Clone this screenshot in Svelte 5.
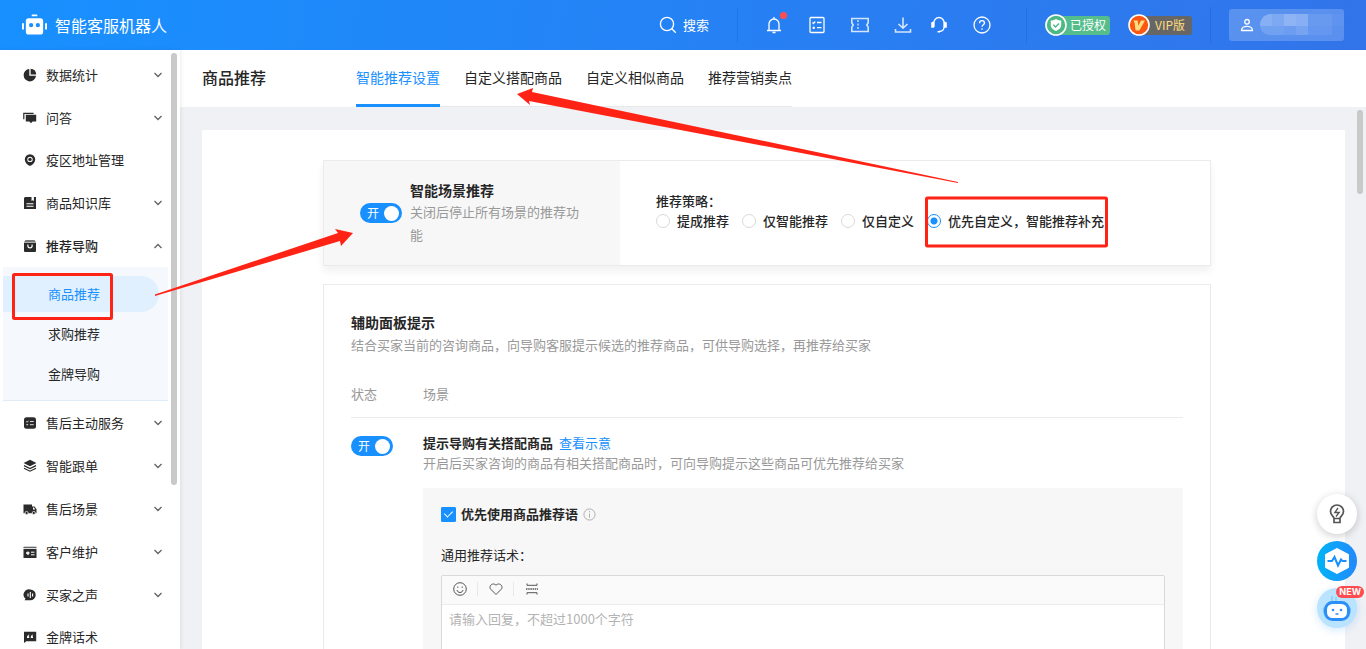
<script lang="ts">
  type MenuItem = { label: string; icon: string; leaf?: boolean; children?: string[] };

  const menu: MenuItem[] = [
    { label: '数据统计', icon: 'pie' },
    { label: '问答', icon: 'chat' },
    { label: '疫区地址管理', icon: 'pin', leaf: true },
    { label: '商品知识库', icon: 'book' },
    { label: '推荐导购', icon: 'bag', children: ['商品推荐', '求购推荐', '金牌导购'] },
    { label: '售后主动服务', icon: 'list' },
    { label: '智能跟单', icon: 'layers' },
    { label: '售后场景', icon: 'truck' },
    { label: '客户维护', icon: 'card' },
    { label: '买家之声', icon: 'voice' },
    { label: '金牌话术', icon: 'quote', leaf: true }
  ];

  const tabs = ['智能推荐设置', '自定义搭配商品', '自定义相似商品', '推荐营销卖点'];
  const strategies = ['提成推荐', '仅智能推荐', '仅自定义', '优先自定义，智能推荐补充'];

  let activeChild = $state('商品推荐');
  let activeTab = $state(tabs[0]);
  let strategy = $state(strategies[3]);
  let sceneOn = $state(true);
  let hintOn = $state(true);
  let preferWords = $state(true);
  let reply = $state('');
</script>

{#snippet menuIcon(name: string)}
  <svg class="menu-icon" viewBox="0 0 14 14" width="14" height="14" aria-hidden="true">
    {#if name === 'pie'}
      <path d="M6.3 1v6.7H13A6.2 6.2 0 1 1 6.3 1Z" />
      <path d="M7.6.8A6 6 0 0 1 13.2 6.4H7.6Z" />
    {:else if name === 'chat'}
      <path d="M.8 8.2V2.3h9.8" fill="none" stroke="#2b2b2b" stroke-width="1.2" />
      <path d="M2.8 3.8h10.4v6.8H9.6L8 12.3l-1.6-1.7H2.8Z" />
    {:else if name === 'pin'}
      <path
        fill-rule="evenodd"
        d="M7 1.2a5.2 5.2 0 0 1 5.2 5.2c0 3-2.5 5.2-5.2 6.6-2.7-1.4-5.2-3.6-5.2-6.6A5.2 5.2 0 0 1 7 1.2Zm0 2.5a2.7 2.7 0 1 0 0 5.4 2.7 2.7 0 0 0 0-5.4Z"
      />
      <circle cx="7" cy="6.4" r="1.7" />
    {:else if name === 'book'}
      <path fill-rule="evenodd" d="M2 1h6.5v4l1.2-.8 1.2.8V1H13v12H1V2ZM3.5 7.2v1h7v-1Zm0 2.600v1h7v-1Z" />
    {:else if name === 'bag'}
      <path d="M2.5 1h9L13 3.2H1Z" fill="#777" />
      <path
        fill-rule="evenodd"
        d="M1 3.7h12V12a1 1 0 0 1-1 1H2a1 1 0 0 1-1-1ZM4.3 5.6v1.2a2.7 2.7 0 0 0 5.4 0V5.6H8.5v1.2a1.5 1.5 0 0 1-3 0V5.600Z"
      />
    {:else if name === 'list'}
      <rect x="1" y="1.3" width="12" height="11.4" rx="2.5" />
      <path d="M3.3 5.5l.9.8 1.2-1.5M3.3 8.7h1.900M7 5.500h3.700M7 8.700h3.700" fill="none" stroke="#ddd" />
    {:else if name === 'layers'}
      <path d="M7 .8 13.4 4 7 7.3.6 4Z" />
      <path d="m1 6.6 6 3 6-3M1 9.2l6 3 6-3" fill="none" stroke="#2b2b2b" stroke-width="1.2" />
    {:else if name === 'truck'}
      <path fill-rule="evenodd" d="M.5 2.5H9v2h2.500l2 2.800v3.900H.5Zm9.500 3v2h2.300l-1.300-2Z" />
      <circle cx="3.6" cy="11" r="1.6" stroke="#fff" stroke-width=".7" />
      <circle cx="10.8" cy="11" r="1.6" stroke="#fff" stroke-width=".7" />
    {:else if name === 'card'}
      <path d="M.5 1.700h13v1.500H.5Z" fill="#666" />
      <path d="M.5 4h13v9H.5Z" />
      <path d="M5 6.500v3.500M3 8h3.500" stroke="#fff" stroke-width="1.300" />
      <path d="M8 7.200h3.500M8 9.800h3.500" stroke="#fff" />
    {:else if name === 'voice'}
      <path d="M7.3 1.500a5.300 5.300 0 1 1 0 10.800H1.500l1-1.600A5.300 5.300 0 0 1 7.300 1.500Z" />
      <path d="M5 5.500v3M7.300 4v6M9.600 5.500v3" stroke="#fff" stroke-width="1.100" />
    {:else}
      <path d="M1 1.800h12.200v9.400H3.300L1 13Z" />
      <path
        d="M6.200 4.600c-1.700.5-2.300 1.500-2.200 3.500h2.200V6.300h-1c0-.6.300-.9 1-1.100Zm3.800 0c-1.700.5-2.300 1.500-2.200 3.500H10V6.300H9c0-.6.300-.9 1-1.100Z"
        fill="#fff"
      />
    {/if}
  </svg>
{/snippet}

<div class="app">
  <header class="topbar">
    <a class="brand" href="#home">
      <svg viewBox="0 0 26 22" width="25" height="22" aria-hidden="true" fill="#fff">
        <rect x="10" y="0" width="6" height="2" rx="1" />
        <rect x="0" y="9" width="2" height="7" rx="1" />
        <rect x="24" y="9" width="2" height="7" rx="1" />
        <path
          fill-rule="evenodd"
          d="M7 4h12a3 3 0 0 1 3 3v11a3 3 0 0 1-3 3H7a3 3 0 0 1-3-3V7a3 3 0 0 1 3-3Zm2.500 5a2.200 2.200 0 1 0 0 4.400 2.200 2.200 0 0 0 0-4.400Zm7 0a2.200 2.200 0 1 0 0 4.400 2.200 2.200 0 0 0 0-4.400Z"
        />
      </svg>
      <span>智能客服机器人</span>
    </a>

    <button class="search" type="button">
      <svg viewBox="0 0 18 18" width="18" height="18" class="line" aria-hidden="true">
        <circle cx="8" cy="8" r="6.600" />
        <path d="m12.800 12.800 4 4" />
      </svg>
      <span>搜索</span>
    </button>
    <i class="divider"></i>

    <nav class="tools" aria-label="工具">
      <button type="button" class="bell" aria-label="通知">
        <svg viewBox="0 0 18 18" width="18" height="18" class="line">
          <path d="M2 14.500h14M4 14.500V8a5 5 0 0 1 10 0v6.500M9 1v2M7.500 16.500h3" />
        </svg>
      </button>
      <button type="button" aria-label="任务">
        <svg viewBox="0 0 18 18" width="18" height="18" class="line">
          <rect x="2" y="1.500" width="14" height="15" rx="1" />
          <path d="m4.500 6.500 1 1 1.700-2M4.700 11l2 1.500M6.700 11l-2 1.500M9 6.500h4.500M9 11.700h4.500" />
        </svg>
      </button>
      <button type="button" aria-label="卡券" class="soft">
        <svg viewBox="0 0 18 18" width="18" height="18" class="line">
          <path d="M.8 2.500h16.400v4.300L15.800 9l1.400 2.200v4.300H.8v-4.300L2.200 9 .8 6.800Z" stroke-width="1.600" />
          <path d="M7 4v10" stroke-dasharray="2 1.500" />
        </svg>
      </button>
      <span class="pair">
        <button type="button" aria-label="下载" class="soft">
          <svg viewBox="0 0 18 18" width="18" height="18" class="line">
            <path d="M9 1.500V12M4.500 8 9 12.200 13.500 8M1.500 13v3h15v-3" stroke-width="1.600" />
          </svg>
        </button>
        <button type="button" aria-label="客服">
          <svg viewBox="0 0 18 18" width="18" height="18" class="line">
            <path d="M4 11V6.500a5 5 0 0 1 10 0V11c0 3-2 4.500-5 4.500" />
            <path d="M3.200 6.500v4.500H2V7ZM14.800 6.500v4.500H16V7ZM7.500 15.700h2.500" stroke-width="1.600" />
          </svg>
        </button>
      </span>
      <button type="button" aria-label="帮助">
        <svg viewBox="0 0 18 18" width="18" height="18" class="line">
          <circle cx="9" cy="9" r="8" />
          <path d="M6.500 7.200c0-3.400 5-3.200 5-.2 0 1.800-2.500 1.800-2.500 3.800M9 12.300v1.400" />
        </svg>
      </button>
    </nav>
    <i class="divider"></i>

    <div class="badges">
      <span class="badge auth">
        <svg viewBox="0 0 22 22" width="22" height="22" aria-hidden="true">
          <circle cx="11" cy="11" r="10" fill="#4cb985" stroke="#fff" stroke-width="1.600" />
          <path d="M11 5c2 1.300 3.500 1.500 5.200 1.500V11c0 3-2.500 4.800-5.200 6-2.700-1.200-5.200-3-5.200-6V6.500C7.500 6.500 9 6.300 11 5Z" fill="#fff" />
          <path d="m8.300 10.700 2.200 2.200 3.500-3.500" fill="none" stroke="#4cb985" stroke-width="1.400" />
        </svg>
        <span>已授权</span>
      </span>
      <span class="badge vip">
        <svg viewBox="0 0 22 22" width="22" height="22" aria-hidden="true">
          <circle cx="11" cy="11" r="10" fill="#fb5713" stroke="#fff" stroke-width="1.600" />
          <path d="M5.300 6.500h4.300l.8 5.200 2.600-5.200h4l-5.600 10H7.600L6.500 8.500Z" fill="#ffdc7c" />
        </svg>
        <span>VIP版</span>
      </span>
    </div>
    <i class="divider"></i>

    <button class="user" type="button" aria-label="账号">
      <svg viewBox="0 0 14 14" width="14" height="14" class="line" aria-hidden="true">
        <circle cx="7" cy="3.800" r="2.300" />
        <path d="M1.500 12.500c0-5.500 11-5.500 11 0Z" />
      </svg>
      <svg class="mask" viewBox="0 0 84 22" width="84" height="22" aria-hidden="true" fill="#fff">
        <path d="M10 0h2v12H0A11 11 0 0 1 10 0Z" fill-opacity=".28" />
        <path d="M12 0h12v12H12Z" fill-opacity=".22" />
        <path d="M24 0h12v12H24Z" fill-opacity=".32" />
        <path d="M36 0h12v12H36Z" fill-opacity=".28" />
        <path d="M48 0h24v12H48Z" fill-opacity=".09" />
        <path d="M72 0h12v12H72Z" fill-opacity=".03" />
        <path d="M0 12h24v9H10A10 10 0 0 1 0 12Z" fill-opacity=".15" />
        <path d="M24 12h12v9H24Z" fill-opacity=".11" />
        <path d="M36 12h12v9H36Z" fill-opacity=".18" />
        <path d="M48 12h24v9H48Z" fill-opacity=".07" />
      </svg>
    </button>
  </header>

  <div class="body">
    <aside class="sidebar">
      <ul class="menu">
        {#each menu as item}
          <li>
            <a class="menu-row" class:leaf={item.leaf} class:open={item.children} href="#menu">
              {@render menuIcon(item.icon)}
              <span>{item.label}</span>
              {#if !item.leaf}
                <svg class="caret" viewBox="0 0 10 10" width="10" height="10" aria-hidden="true">
                  <path d={item.children ? 'm1.500 7 3.500-3.500L8.500 7' : 'm1.500 3 3.500 3.500L8.500 3'} />
                </svg>
              {/if}
            </a>
            {#if item.children}
              <ul class="submenu">
                {#each item.children as child}
                  <li>
                    <a href="#sub" class:active={child === activeChild} onclick={() => (activeChild = child)}>{child}</a>
                  </li>
                {/each}
              </ul>
            {/if}
          </li>
        {/each}
      </ul>
      <i class="side-thumb"></i>
    </aside>

    <main class="main">
      <div class="page-head">
        <h1>商品推荐</h1>
        <nav class="tabs">
          {#each tabs as tab}
            <button type="button" class:active={tab === activeTab} onclick={() => (activeTab = tab)}>{tab}</button>
          {/each}
        </nav>
      </div>

      <div class="page-body">
        <i class="page-thumb"></i>
        <div class="sheet">
          <section class="panel scene">
            <div class="scene-left">
              <button class="switch" type="button" role="switch" aria-checked={sceneOn} aria-label="智能场景推荐" onclick={() => (sceneOn = !sceneOn)}>
                <span>{sceneOn ? '开' : '关'}</span><i></i>
              </button>
              <div>
                <h2>智能场景推荐</h2>
                <p>关闭后停止所有场景的推荐功能</p>
              </div>
            </div>
            <fieldset class="scene-right">
              <legend>推荐策略：</legend>
              <div class="radios">
                {#each strategies as s}
                  <label><input type="radio" name="strategy" value={s} bind:group={strategy} />{s}</label>
                {/each}
              </div>
            </fieldset>
          </section>

          <section class="panel hints">
            <h2>辅助面板提示</h2>
            <p class="muted">结合买家当前的咨询商品，向导购客服提示候选的推荐商品，可供导购选择，再推荐给买家</p>

            <table>
              <thead>
                <tr><th class="state">状态</th><th>场景</th></tr>
              </thead>
              <tbody>
                <tr>
                  <td>
                    <button class="switch" type="button" role="switch" aria-checked={hintOn} aria-label="提示导购有关搭配商品" onclick={() => (hintOn = !hintOn)}>
                      <span>{hintOn ? '开' : '关'}</span><i></i>
                    </button>
                  </td>
                  <td>
                    <div class="scene-title"><strong>提示导购有关搭配商品</strong><a href="#demo">查看示意</a></div>
                    <p class="muted">开启后买家咨询的商品有相关搭配商品时，可向导购提示这些商品可优先推荐给买家</p>

                    <div class="config">
                      <label class="check">
                        <input type="checkbox" bind:checked={preferWords} />
                        <span>优先使用商品推荐语</span>
                        <svg viewBox="0 0 14 14" width="13" height="13" aria-hidden="true">
                          <circle cx="7" cy="7" r="6" /><path d="M7 3.300v1.400M7 6v4.500" />
                        </svg>
                      </label>
                      <label class="words" for="reply">通用推荐话术：</label>
                      <div class="editor">
                        <div class="editor-bar">
                          <button type="button" aria-label="表情">
                            <svg viewBox="0 0 14 14" width="14" height="14">
                              <circle cx="7" cy="7" r="6.300" />
                              <path d="M4 8c.3 3.300 5.700 3.300 6 0M4.800 4.500v1.400M9.200 4.500v1.400" />
                            </svg>
                          </button>
                          <button type="button" aria-label="收藏">
                            <svg viewBox="0 0 14 14" width="14" height="14">
                              <path d="M7 12.500 1.700 7.200C-.8 4 3.800-.2 7 3.300c3.200-3.500 7.800.7 5.300 3.900Z" />
                            </svg>
                          </button>
                          <button type="button" aria-label="分隔">
                            <svg viewBox="0 0 14 14" width="14" height="14">
                              <path d="M2 1.500v1.800h10V1.500M2 12.500v-1.800h10v1.800" />
                              <path d="M1 7h12" stroke-width="1.500" stroke-dasharray="1.500 .7" />
                            </svg>
                          </button>
                        </div>
                        <textarea id="reply" rows="4" placeholder="请输入回复，不超过1000个字符" bind:value={reply}></textarea>
                      </div>
                    </div>
                  </td>
                </tr>
              </tbody>
            </table>
          </section>
        </div>
      </div>
    </main>
  </div>

  <div class="floaters">
    <button type="button" class="tip" aria-label="提示">
      <svg viewBox="0 0 16 20" width="16" height="20" fill="none" stroke="#555" stroke-width="1.700">
        <path d="M5 14.500c0-2-3.500-3.200-3.500-7a6.500 6.500 0 0 1 13 0c0 3.800-3.500 5-3.500 7ZM5 15v3.500h6V15" />
        <path d="M9 4 5.800 8.500h4.400L7 12.500" stroke-width="1.300" />
      </svg>
    </button>
    <button type="button" class="pulse" aria-label="诊断">
      <svg viewBox="0 0 26 28" width="26" height="28">
        <path d="M13 1.500 24.500 7.500v13L13 26.500 1.500 20.500v-13Z" fill="#fff" stroke="#fff" stroke-linejoin="round" />
        <path d="M3.500 14H8l2.500-4 3.500 8.500 3-6 1.500 1.500h4" fill="none" stroke="#1890ff" stroke-width="2" />
      </svg>
    </button>
    <button type="button" class="robot" aria-label="机器人">
      <svg viewBox="0 0 28 28" width="28" height="28">
        <path d="M9 7V2M13 8V3" stroke="#8accfb" stroke-width="1.500" />
        <rect x="0" y="12" width="28" height="9" rx="4" fill="#6ec2ff" />
        <rect x="2.500" y="8.500" width="23" height="17" rx="7" fill="#fff" stroke="#2a8ff7" stroke-width="3" />
        <circle cx="10" cy="16" r="1.300" fill="#2a8ff7" />
        <circle cx="18" cy="16" r="1.300" fill="#2a8ff7" />
        <path d="M12.500 20h3" stroke="#2a8ff7" stroke-width="1.500" />
      </svg>
      <em>NEW</em>
    </button>
  </div>

  <!-- walkthrough marks over the page -->
  <svg class="marks" width="1366" height="649" aria-hidden="true">
    <rect x="13.500" y="274.500" width="98" height="44" rx="1" />
    <rect x="926.500" y="198" width="180" height="48" rx="1" />
    <path d="M155 294.500 338 233l-3-4 18 4-12 13-1-5-185 55Z" />
    <path d="M958 182 532 92l1-4-16 6 13 11-1-4 429 82Z" />
  </svg>
</div>

<style>
  :global(body) {
    margin: 0;
  }

  .app {
    position: relative;
    display: flex;
    flex-direction: column;
    height: 100vh;
    overflow: hidden;
    font: 13px/20px 'Noto Sans CJK SC', 'Noto Sans', sans-serif;
    color: #262626;
  }

  .app *,
  .app *::before,
  .app *::after {
    box-sizing: border-box;
  }

  button {
    padding: 0;
    border: 0;
    background: none;
    font: inherit;
    color: inherit;
    cursor: pointer;
  }

  a {
    color: inherit;
    text-decoration: none;
  }

  ul,
  h1,
  h2,
  p {
    margin: 0;
    padding: 0;
    list-style: none;
  }

  svg {
    display: block;
    flex: none;
  }

  /* top bar */
  .topbar {
    display: flex;
    flex: none;
    align-items: center;
    height: 50px;
    padding: 0 22px;
    background: linear-gradient(100deg, #1890ff, #3274ea);
    color: #fff;
  }

  .brand {
    display: flex;
    align-items: center;
    gap: 8px;
    margin-right: auto;
    font-size: 16px;
  }

  .line {
    fill: none;
    stroke: currentColor;
    stroke-width: 1.3;
  }

  .search {
    display: flex;
    align-items: center;
    gap: 6px;
    margin-right: 28px;
  }

  .divider {
    width: 1px;
    height: 36px;
    background: rgb(0 60 160 / 0.16);
  }

  .tools {
    display: flex;
    gap: 25px;
    margin: 0 35px 0 27px;
  }

  .pair {
    display: flex;
    gap: 18px;
  }

  .soft {
    opacity: 0.8;
  }

  .bell {
    position: relative;
  }

  .bell::after {
    content: '';
    position: absolute;
    top: -4px;
    right: -4px;
    width: 7px;
    height: 7px;
    border-radius: 50%;
    background: #ff4d4f;
  }

  .badges {
    display: flex;
    gap: 18px;
    margin: 0 18px;
  }

  .badge {
    display: flex;
    align-items: center;
    gap: 3px;
    height: 19px;
    padding-right: 4px;
    border-radius: 9px 3px 3px 9px;
    font-size: 12px;
  }

  .auth {
    background: #55bd8b;
  }

  .vip {
    gap: 5px;
    padding-right: 7px;
    background: #666;
    color: #ffdc7c;
  }

  .user {
    display: flex;
    align-items: center;
    gap: 6px;
    width: 115px;
    height: 32px;
    margin-left: 18px;
    padding-left: 11px;
    border-radius: 3px;
    background: rgb(255 255 255 / 0.2);
  }

  /* sidebar */
  .body {
    display: flex;
    flex: 1;
    min-height: 0;
  }

  .sidebar {
    position: relative;
    z-index: 1;
    flex: none;
    width: 180px;
    overflow: hidden;
    background: #fff;
    box-shadow: 1px 0 4px rgb(0 0 0 / 0.08);
  }

  .menu {
    padding: 3px 12px 0 3px;
  }

  .menu-row {
    display: flex;
    align-items: center;
    gap: 9px;
    height: 43px;
    padding: 0 5px 0 20px;
  }

  .menu-row.leaf {
    height: 42px;
  }

  .menu-row.open {
    font-weight: 500;
  }

  .menu-icon {
    fill: #2b2b2b;
  }

  .caret {
    margin-left: auto;
    fill: none;
    stroke: #666;
    stroke-width: 1.4;
  }

  .submenu {
    display: flex;
    flex-direction: column;
    gap: 4px;
    padding: 9px 0 8px;
    border-bottom: 1px solid #dfebf7;
    background: #f5f9fd;
  }

  .submenu a {
    display: block;
    width: 156px;
    padding: 8px 0 8px 45px;
    border-radius: 0 18px 18px 0;
  }

  .submenu a.active {
    background: #e1f0ff;
    color: #1890ff;
  }

  .side-thumb,
  .page-thumb {
    position: absolute;
    top: 3px;
    right: 3px;
    width: 6px;
    border-radius: 3px;
    background: #c9c9c9;
  }

  .side-thumb {
    height: 432px;
  }

  .page-thumb {
    height: 84px;
  }

  /* page */
  .main {
    display: flex;
    flex: 1;
    flex-direction: column;
    min-width: 0;
  }

  .page-head {
    display: flex;
    flex: none;
    gap: 90px;
    height: 57px;
    padding-left: 22px;
    background: #fff;
  }

  h1 {
    font-size: 16px;
    line-height: 54px;
    font-weight: 500;
  }

  .tabs {
    display: flex;
    gap: 24px;
    box-shadow: inset 0 -1px #e8e8e8;
    font-size: 14px;
  }

  .tabs button {
    border-bottom: 3px solid transparent;
  }

  .tabs button.active {
    border-bottom-color: #1890ff;
    color: #1890ff;
  }

  .page-body {
    position: relative;
    flex: 1;
    overflow: hidden;
    padding: 23px 21px 0 22px;
    background: #f0f1f5;
  }

  .sheet {
    padding: 30px 134px 0 121px;
    background: #fff;
  }

  .panel {
    border: 1px solid #ebebeb;
    background: #fff;
  }

  h2 {
    font-size: 14px;
    line-height: 20px;
    font-weight: 700;
  }

  .scene {
    display: flex;
    height: 106px;
    margin-bottom: 18px;
    box-shadow: 0 5px 8px rgb(0 0 0 / 0.06);
  }

  .scene-left {
    display: flex;
    flex: none;
    align-items: center;
    gap: 8px;
    width: 296px;
    padding: 0 36px;
    background: #f7f7f7;
  }

  .scene-left p {
    color: #999;
    line-height: 23px;
  }

  .scene-right {
    margin: 0;
    padding: 30px 0 0 36px;
    border: 0;
    min-width: 0;
  }

  legend {
    float: left;
    width: 100%;
    padding: 0;
    font-weight: 500;
  }

  .radios {
    display: flex;
    gap: 13px;
    clear: both;
    font-weight: 500;
    white-space: nowrap;
  }

  .radios label {
    display: flex;
    align-items: center;
    gap: 7px;
  }

  input {
    appearance: none;
    flex: none;
    margin: 0;
    background: #fff;
  }

  input[type='radio'] {
    width: 14px;
    height: 14px;
    border: 1px solid #d9d9d9;
    border-radius: 50%;
  }

  input[type='radio']:checked {
    border-color: #1890ff;
    background: radial-gradient(circle, #1890ff 3px, #fff 4px);
  }

  .switch {
    display: flex;
    flex: none;
    align-items: center;
    justify-content: space-between;
    width: 42px;
    height: 20px;
    padding: 0 3px 0 7px;
    border-radius: 10px;
    background: #1890ff;
    color: #fff;
    font-size: 12px;
  }

  .switch[aria-checked='false'] {
    flex-direction: row-reverse;
    padding: 0 7px 0 3px;
    background: #bfbfbf;
  }

  .switch i {
    width: 15px;
    height: 15px;
    border-radius: 50%;
    background: #fff;
  }

  .hints {
    padding: 27px 27px 0;
  }

  .muted {
    color: #999;
  }

  .hints > .muted {
    padding-top: 3px;
  }

  table {
    width: 100%;
    margin-top: 29px;
    border-collapse: collapse;
  }

  th {
    padding: 0 0 13px;
    border-bottom: 1px solid #ebebeb;
    color: #999;
    font-weight: 400;
    text-align: left;
  }

  .state {
    width: 72px;
  }

  td {
    padding: 15px 0 0;
    vertical-align: top;
  }

  td .switch {
    margin-top: 3px;
  }

  .scene-title {
    display: flex;
    gap: 6px;
  }

  .scene-title strong {
    font-weight: 700;
  }

  .scene-title a {
    color: #1890ff;
  }

  .config {
    margin-top: 15px;
    padding: 16px 18px 40px;
    background: #f7f7f7;
  }

  .check {
    display: flex;
    align-items: center;
    gap: 5px;
    font-weight: 700;
  }

  .check input {
    width: 15px;
    height: 15px;
    border: 1px solid #d9d9d9;
    border-radius: 1px;
  }

  .check input:checked {
    border-color: #1890ff;
    background: #1890ff;
  }

  .check input:checked::after {
    content: '';
    display: block;
    width: 5px;
    height: 8px;
    margin: 1px 0 0 4px;
    border: solid #fff;
    border-width: 0 1px 1px 0;
    transform: rotate(45deg);
  }

  .check svg {
    fill: none;
    stroke: #aaa;
  }

  .words {
    display: block;
    padding: 21px 0 10px;
  }

  .editor {
    border: 1px solid #d9d9d9;
    border-radius: 2px;
    background: #fff;
  }

  .editor-bar {
    display: flex;
    align-items: center;
    height: 29px;
    padding-bottom: 3px;
    border-bottom: 1px solid #ececec;
    background: #fafafa;
  }

  .editor-bar button {
    display: flex;
    justify-content: center;
    width: 36px;
    border-right: 1px solid #e8e8e8;
  }

  .editor-bar button:last-child {
    border-right-color: transparent;
  }

  .editor-bar svg {
    fill: none;
    stroke: #555;
  }

  textarea {
    display: block;
    width: 100%;
    padding: 4px 7px;
    border: 0;
    outline: 0;
    resize: none;
    background: none;
    font: inherit;
  }

  textarea::placeholder {
    color: #b3b3b3;
  }

  /* floating helpers */
  .floaters {
    position: absolute;
    right: 9px;
    bottom: 21px;
    z-index: 2;
    display: flex;
    flex-direction: column;
    gap: 7px;
  }

  .floaters button {
    position: relative;
    display: grid;
    place-items: center;
    width: 40px;
    height: 40px;
    border-radius: 50%;
  }

  .tip {
    background: #fff;
    box-shadow: 0 2px 8px rgb(0 0 0 / 0.2);
  }

  .pulse {
    background: linear-gradient(90deg, #00b4f8, #2389fb);
  }

  .robot {
    background: #b9e3ff;
    box-shadow: 0 2px 8px rgb(24 144 255 / 0.2);
  }

  .robot em {
    position: absolute;
    top: -2px;
    right: -7px;
    padding: 0 3px;
    border-radius: 6px;
    background: #ff4d4f;
    color: #fff;
    font: 700 9px/12px Inter, sans-serif;
  }

  .marks {
    position: absolute;
    top: 0;
    left: 0;
    z-index: 3;
    fill: #ff2315;
    pointer-events: none;
  }

  .marks rect {
    fill: none;
    stroke: #ff2315;
    stroke-width: 3;
  }
</style>
